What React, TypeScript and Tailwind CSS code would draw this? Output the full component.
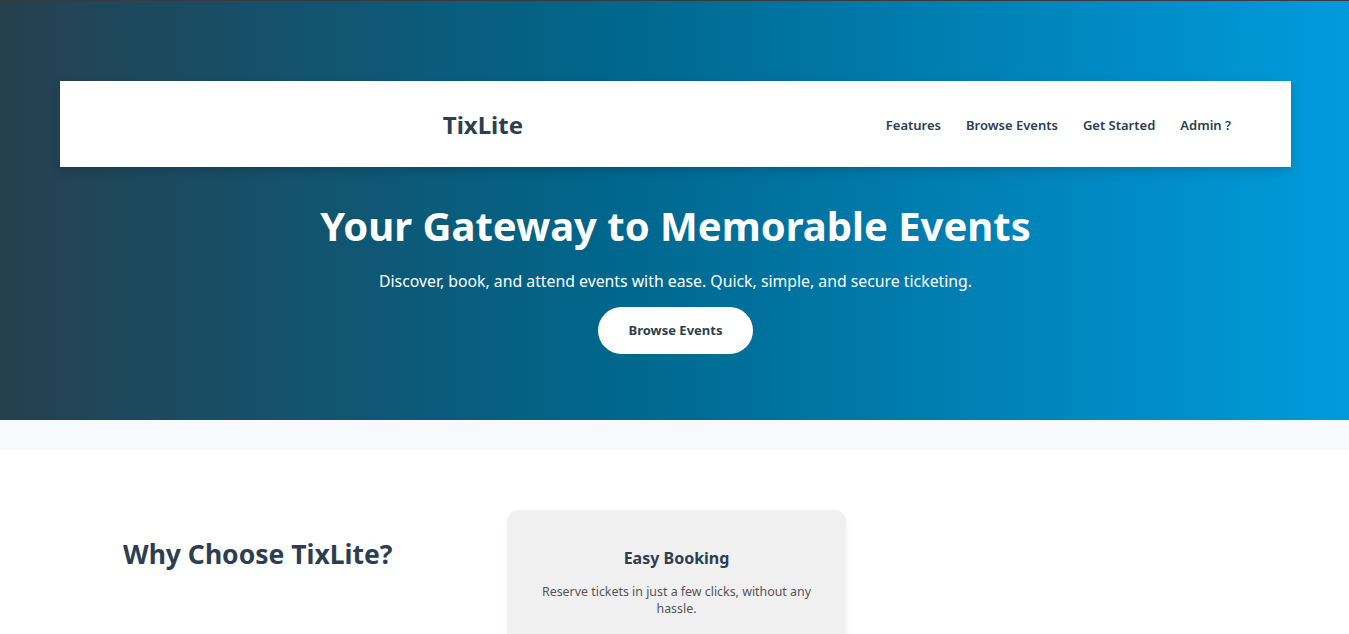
const links = ["Features", "Browse Events", "Get Started", "Admin ?"];

function Navbar() {
  return (
    <nav className="flex items-center h-[86px] bg-white shadow-[0_4px_10px_rgba(0,0,0,0.15)]">
      <div className="flex-1 flex justify-center pl-[140px] pt-[2px]">
        <span className="text-[24px] font-bold text-[#2c3e50]">TixLite</span>
      </div>
      <ul className="flex items-center gap-[25px] pr-[60px] pl-[120px] pt-[3px]">
        {links.map((l) => (
          <li key={l} className="text-[13px] font-semibold text-[#2c3e50]">
            {l}
          </li>
        ))}
      </ul>
    </nav>
  );
}

function Hero() {
  return (
    <header className="h-[420px] border-t border-[#3a3a3a] bg-[linear-gradient(to_right,#26404f_0%,#00668c_45%,#009bdd_100%)] pl-[60px] pr-[58px] pt-[80px]">
      <Navbar />
      <div className="flex flex-col items-center text-white">
        <h1 className="mt-[34px] text-[40px] leading-[50px] font-bold">Your Gateway to Memorable Events</h1>
        <p className="mt-[19px] text-[15.8px] leading-[22px]">
          Discover, book, and attend events with ease. Quick, simple, and secure ticketing.
        </p>
        <button className="mt-[15px] w-[155px] h-[47px] rounded-full bg-white text-[#2c3e50] text-[13px] font-bold">
          Browse Events
        </button>
      </div>
    </header>
  );
}

function Features() {
  return (
    <section className="bg-white pt-[60px] flex">
      <div className="w-[507px] pl-[123px] pt-[25px]">
        <h2 className="text-[26.5px] font-bold text-[#2c3e50]">Why Choose TixLite?</h2>
      </div>
      <div className="w-[339px] h-[160px] rounded-[12px] bg-[#f0f0f0] shadow-[0_2px_6px_rgba(0,0,0,0.05)] px-[24px] pt-[36px] text-center">
        <h3 className="text-[16px] font-bold text-[#2c3e50]">Easy Booking</h3>
        <p className="mt-[13px] text-[12.4px] leading-[17px] text-[#555]">
          Reserve tickets in just a few clicks, without any hassle.
        </p>
      </div>
    </section>
  );
}

export default function App() {
  return (
    <div className="min-h-screen bg-white font-['Noto_Sans',sans-serif] overflow-hidden">
      <Hero />
      <div className="h-[30px] bg-[#f7f9fc]" />
      <Features />
    </div>
  );
}
